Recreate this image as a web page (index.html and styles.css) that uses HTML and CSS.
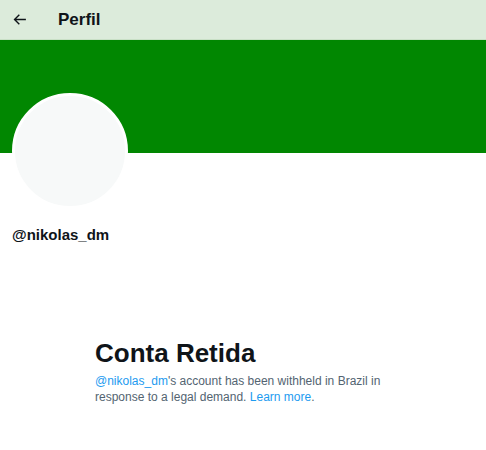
FILE: index.html
```html
<!DOCTYPE html>
<html>
<head>
<meta charset="utf-8">
<link rel="stylesheet" href="styles.css">
</head>
<body>
<div class="page">
  <header class="topbar">
    <span class="back">
      <svg width="17" height="17" viewBox="0 0 24 24"><path d="M7.414 13l5.043 5.04-1.414 1.42L3.586 12l7.457-7.46 1.414 1.42L7.414 11H21v2H7.414z" fill="#0f1419"/></svg>
    </span>
    <h1 class="title">Perfil</h1>
  </header>
  <div class="banner"></div>
  <div class="profile">
    <div class="avatar"></div>
    <div class="handle">@nikolas_dm</div>
  </div>
  <div class="empty">
    <h2 class="empty-title">Conta Retida</h2>
    <p class="empty-text"><span class="link">@nikolas_dm</span>'s account has been withheld in Brazil in response to a legal demand. <span class="link">Learn more</span>.</p>
  </div>
</div>
</body>
</html>
```
FILE: styles.css
```css
* { box-sizing: border-box; }
html, body { margin: 0; padding: 0; background: #fff; }
body { font-family: "Liberation Sans", Arial, sans-serif; color: #0f1419; }
.page { width: 486px; }
.topbar {
  height: 40px;
  background: #dcebdb;
  display: flex;
  align-items: center;
  padding-left: 11px;
  border-bottom: 1px solid #c9e0c6;
}
.back { display: flex; width: 47px; }
.title { margin: 0; font-size: 17px; font-weight: bold; line-height: 20px; }
.banner { height: 113px; background: #018701; }
.profile { padding: 0 12px; }
.avatar {
  width: 116px; height: 116px;
  margin-top: -60px;
  border-radius: 50%;
  background: #f7f9f9;
  border: 3px solid #fff;
}
.handle { margin-top: 16px; font-size: 15px; font-weight: bold; line-height: 20px; }
.empty { max-width: 336px; margin: 0 auto; padding: 93px 20px 0; }
.empty-title { margin: 0; font-size: 26px; font-weight: bold; line-height: 30px; }
.empty-text { margin: 5px 0 0; font-size: 12px; line-height: 16px; color: #536471; }
.link { color: #1d9bf0; }
```
